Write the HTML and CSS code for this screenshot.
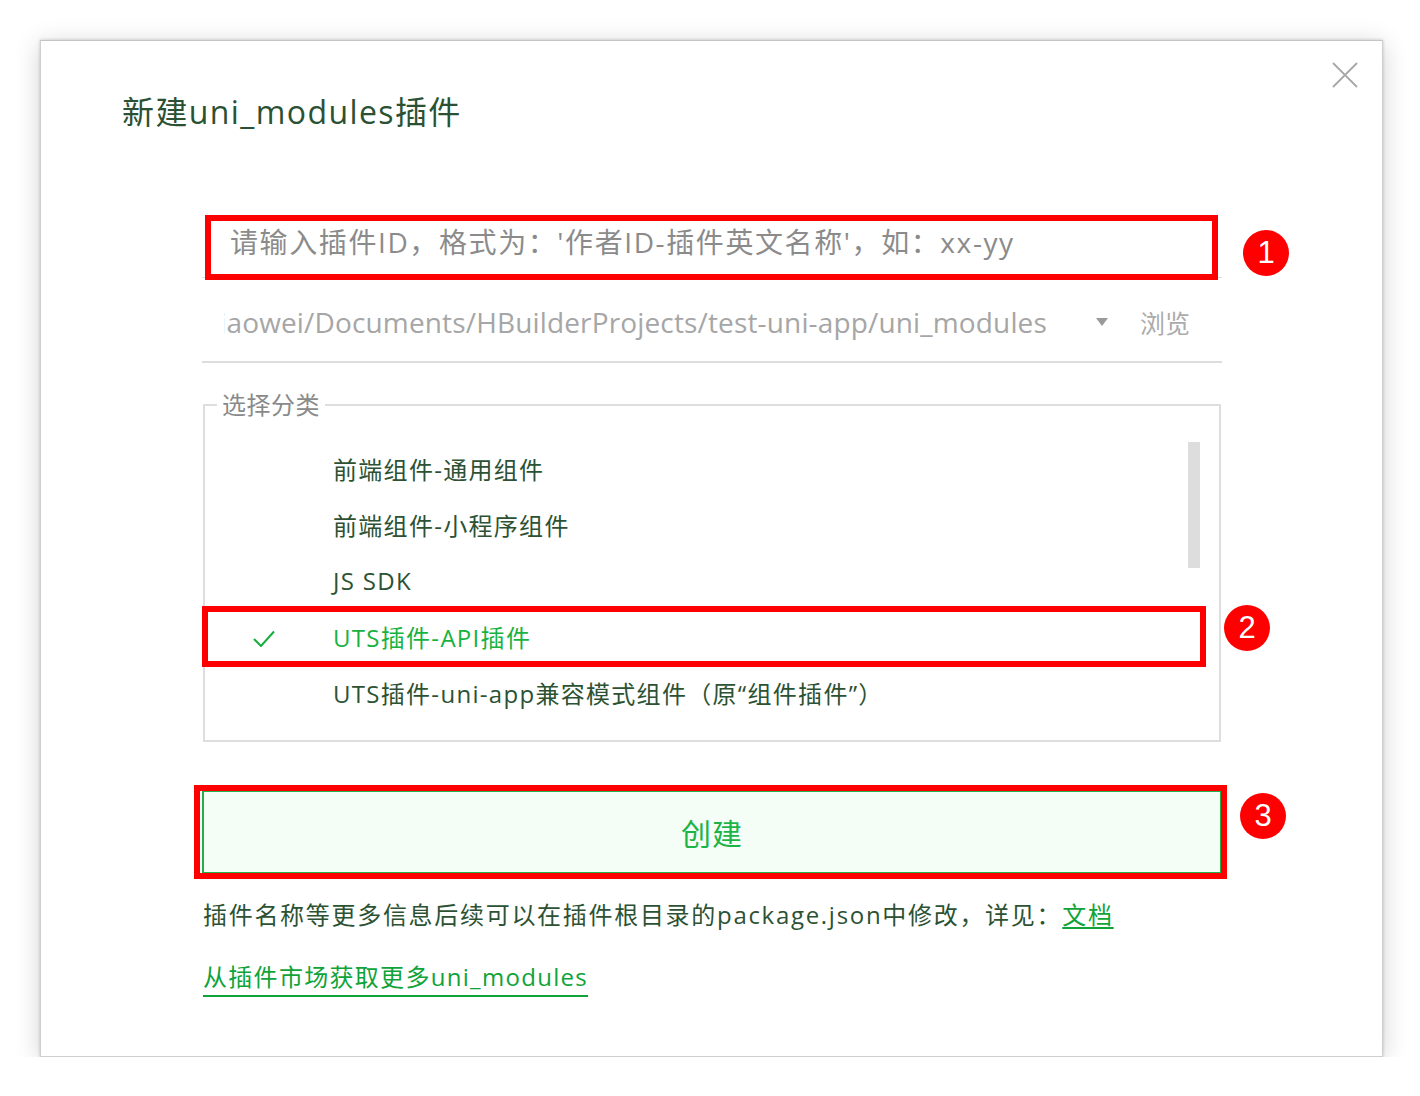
FILE: index.html
```html
<!DOCTYPE html>
<html lang="zh-CN">
<head>
  <meta charset="UTF-8">
  <meta name="viewport" content="width=device-width, initial-scale=1.0">
  <title>新建uni_modules插件</title>
  <link rel="stylesheet" href="styles.css">
</head>
<body>
  <div class="dialog">
    <!-- Заголовок і кнопка закриття -->
    <div class="dialog-header">
      <h1 class="dialog-title">新建uni_modules插件</h1>
      <button class="close-btn" type="button" aria-label="关闭">
        <svg width="26" height="26" viewBox="0 0 26 26">
          <path d="M1 1L25 25M25 1L1 25" stroke="#a8a8a8" stroke-width="1.8" fill="none"/>
        </svg>
      </button>
    </div>

    <div class="dialog-body">
      <!-- Поле ID плагіна -->
      <div class="id-row">
        <input type="text" class="id-input" placeholder="请输入插件ID，格式为：'作者ID-插件英文名称'，如：xx-yy">
        <span class="mark mark-id"></span>
        <span class="badge badge-id">1</span>
      </div>

      <!-- Шлях до каталогу -->
      <div class="path-row">
        <div class="path-text"><span>/Users/xiaowei/Documents/HBuilderProjects/test-uni-app/uni_modules</span></div>
        <svg class="path-arrow" width="12" height="8" viewBox="0 0 12 8">
          <path d="M0 0H12L6 8Z" fill="#9a9a9a"/>
        </svg>
        <span class="browse">浏览</span>
      </div>

      <!-- Вибір категорії -->
      <fieldset class="category">
        <legend>选择分类</legend>
        <div class="options">
          <div class="option-list">
            <div class="option"><span class="check"></span><span>前端组件-通用组件</span></div>
            <div class="option"><span class="check"></span><span>前端组件-小程序组件</span></div>
            <div class="option"><span class="check"></span><span>JS SDK</span></div>
            <div class="option selected">
              <span class="check">
                <svg width="22" height="17" viewBox="0 0 22 17">
                  <path d="M1 9L8 16L21 1.5" stroke="#17ad3d" stroke-width="2" fill="none"/>
                </svg>
              </span>
              <span>UTS插件-API插件</span>
              <span class="mark mark-option"></span>
              <span class="badge badge-option">2</span>
            </div>
            <div class="option"><span class="check"></span><span>UTS插件-uni-app兼容模式组件（原“组件插件”）</span></div>
          </div>
          <div class="scrollbar"></div>
        </div>
      </fieldset>

      <!-- Кнопка створення -->
      <div class="create-wrap">
        <button class="create-btn" type="button">创建</button>
        <span class="mark mark-create"></span>
        <span class="badge badge-create">3</span>
      </div>

      <p class="note">插件名称等更多信息后续可以在插件根目录的package.json中修改，详见：<a href="#" class="doc-link">文档</a></p>
      <p class="market"><a href="#" class="market-link">从插件市场获取更多uni_modules</a></p>
    </div>
  </div>
</body>
</html>
```

FILE: styles.css
```css
/* Загальні стилі */
html, body {
  margin: 0;
  padding: 0;
  background: #ffffff;
}

body {
  font-family: "Open Sans", "Noto Sans CJK SC", sans-serif;
  color: #2c5233;
}

/* Вікно діалогу */
.dialog {
  margin: 40px 0 0 40px;
  width: 1343px;
  height: 1017px;
  box-sizing: border-box;
  border: 1px solid #cfcfcf;
  border-top-color: #c4c4c4;
  background: #ffffff;
  box-shadow: 0 0 3px rgba(0, 0, 0, 0.2), 0 4px 24px rgba(0, 0, 0, 0.18);
}

.dialog-header {
  display: flex;
  justify-content: space-between;
  align-items: flex-start;
  padding: 21px 24px 0 81px;
}

.dialog-title {
  margin: 30px 0 0 0;
  font-size: 32px;
  line-height: 40px;
  font-weight: normal;
  letter-spacing: 1.4px;
  color: #2b5134;
}

.close-btn {
  border: none;
  background: none;
  padding: 0;
  width: 26px;
  height: 26px;
  display: block;
  cursor: pointer;
}

.close-btn svg {
  display: block;
}

.dialog-body {
  padding: 0 160px 0 161px;
}

/* Червоні рамки-позначки та номери */
.mark {
  position: absolute;
  box-sizing: border-box;
  border: 6px solid #ff0000;
  pointer-events: none;
}

.badge {
  position: absolute;
  width: 46px;
  height: 46px;
  border-radius: 50%;
  background: #ff0000;
  color: #ffffff;
  font-family: "Liberation Sans", sans-serif;
  font-size: 31px;
  line-height: 46px;
  text-align: center;
  letter-spacing: 0;
}

/* Поле ID */
.id-row {
  position: relative;
  margin-top: 85px;
}

.id-input {
  display: block;
  width: 100%;
  height: 61px;
  box-sizing: border-box;
  border: none;
  border-bottom: 1px solid #dedede;
  padding: 0 0 10px 28px;
  font-family: inherit;
  font-size: 28px;
  letter-spacing: 1.6px;
  color: #333;
  outline: none;
  background: transparent;
}

.id-input::placeholder {
  color: #8b8b8b;
}

.mark-id {
  left: 3px;
  top: -2px;
  width: 1013px;
  height: 65px;
}

.badge-id {
  left: 1041px;
  top: 13px;
}

/* Рядок шляху */
.path-row {
  display: flex;
  align-items: center;
  height: 85px;
  box-sizing: border-box;
  padding-top: 4px;
  border-bottom: 2px solid #dddddd;
}

.path-text {
  margin-left: 22px;
  width: 823px;
  display: flex;
  justify-content: flex-end;
  overflow: hidden;
  white-space: nowrap;
  font-size: 28px;
  letter-spacing: 0.15px;
  color: #a6a6a6;
}

.path-arrow {
  margin-left: 49px;
  display: block;
}

.browse {
  margin-left: 32px;
  font-size: 25px;
  color: #ababab;
}

/* Категорії */
.category {
  margin: 27px 1px 0 1px;
  padding: 22px 0 18px 0;
  border: 2px solid #dedede;
  min-width: 0;
}

.category legend {
  margin-left: 12px;
  padding: 0 5px;
  font-size: 24px;
  line-height: 30px;
  letter-spacing: 0.5px;
  color: #8a8a8a;
}

.options {
  display: flex;
  align-items: flex-start;
}

.option-list {
  flex: 1;
}

.scrollbar {
  width: 12px;
  height: 126px;
  background: #dddddd;
  margin-right: 19px;
}

.option {
  position: relative;
  display: flex;
  align-items: center;
  height: 56px;
  box-sizing: border-box;
  padding-bottom: 3px;
  font-size: 24px;
  letter-spacing: 1.3px;
  color: #2c5233;
}

.check {
  width: 80px;
  margin-left: 48px;
  display: flex;
  align-items: center;
  padding-top: 3px;
}

.check svg {
  display: block;
}

.option.selected {
  color: #17b23f;
}

.mark-option {
  left: -3px;
  right: -18px;
  top: -4px;
  bottom: -1px;
}

.badge-option {
  left: 1019px;
  top: -5px;
}

/* Кнопка створення */
.create-wrap {
  position: relative;
  margin: 49px 1px 0 0;
}

.create-btn {
  display: block;
  width: 100%;
  height: 82px;
  box-sizing: border-box;
  border: 1px solid #23b04a;
  border-left-width: 2px;
  background: #f5fdf7;
  color: #1db447;
  font-family: inherit;
  font-size: 30px;
  letter-spacing: 1px;
  cursor: pointer;
}

.mark-create {
  left: -8px;
  right: -6px;
  top: -6px;
  bottom: -6px;
}

.badge-create {
  left: 1038px;
  top: 2px;
}

/* Примітки внизу */
.note {
  margin: 24px 0 0 1px;
  font-size: 24px;
  line-height: 36px;
  letter-spacing: 1.7px;
  color: #2c5233;
}

.doc-link {
  color: #0fa339;
  text-underline-offset: 3px;
}

.market {
  margin: 26px 0 0 1px;
  font-size: 24px;
  line-height: 36px;
  letter-spacing: 1.3px;
}

.market-link {
  color: #0fa339;
  text-underline-offset: 9px;
}
```
